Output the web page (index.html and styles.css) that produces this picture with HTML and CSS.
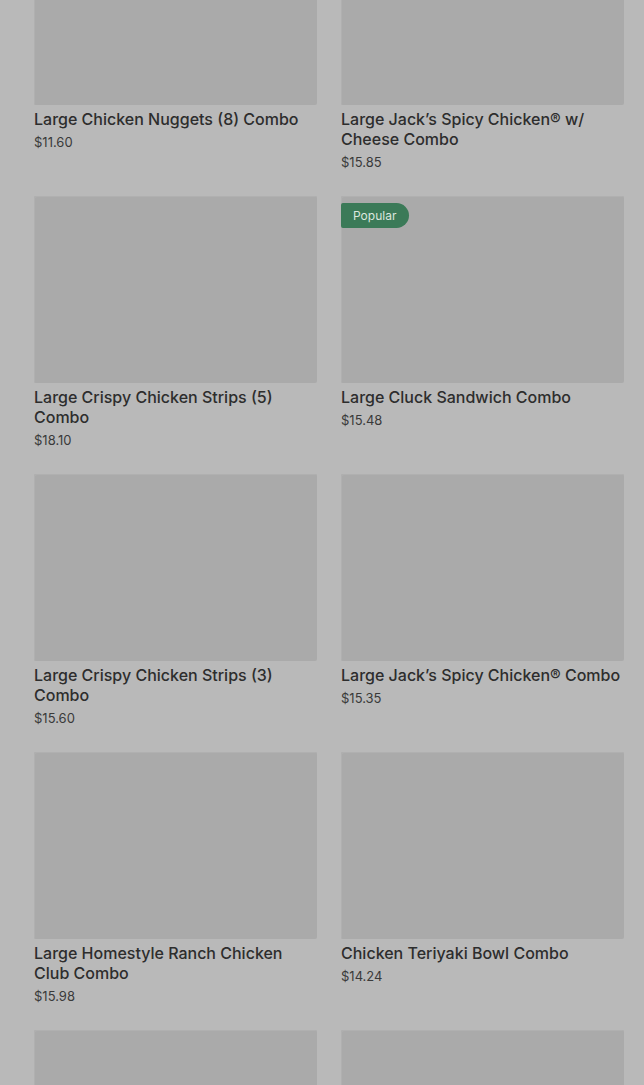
FILE: index.html
```html
<!DOCTYPE html>
<html lang="en">
<head>
<meta charset="utf-8">
<title>Menu</title>
<link rel="stylesheet" href="styles.css">
</head>
<body>
<main class="grid">
  <article class="card">
    <div class="thumb"></div>
    <h3 class="title">Large Chicken Nuggets (8) Combo</h3>
    <div class="price">$11.60</div>
  </article>
  <article class="card">
    <div class="thumb"></div>
    <h3 class="title">Large Jack’s Spicy Chicken® w/ Cheese Combo</h3>
    <div class="price">$15.85</div>
  </article>
  <article class="card">
    <div class="thumb"></div>
    <h3 class="title">Large Crispy Chicken Strips (5) Combo</h3>
    <div class="price">$18.10</div>
  </article>
  <article class="card">
    <div class="thumb"><span class="badge">Popular</span></div>
    <h3 class="title">Large Cluck Sandwich Combo</h3>
    <div class="price">$15.48</div>
  </article>
  <article class="card">
    <div class="thumb"></div>
    <h3 class="title">Large Crispy Chicken Strips (3) Combo</h3>
    <div class="price">$15.60</div>
  </article>
  <article class="card">
    <div class="thumb"></div>
    <h3 class="title">Large Jack’s Spicy Chicken® Combo</h3>
    <div class="price">$15.35</div>
  </article>
  <article class="card">
    <div class="thumb"></div>
    <h3 class="title">Large Homestyle Ranch Chicken Club Combo</h3>
    <div class="price">$15.98</div>
  </article>
  <article class="card">
    <div class="thumb"></div>
    <h3 class="title">Chicken Teriyaki Bowl Combo</h3>
    <div class="price">$14.24</div>
  </article>
  <article class="card">
    <div class="thumb"></div>
  </article>
  <article class="card">
    <div class="thumb"></div>
  </article>
</main>
</body>
</html>
```
FILE: styles.css
```css
html, body {
  margin: 0;
  padding: 0;
  background: #b9b9b9;
  overflow: hidden;
  height: 1085px;
}
body {
  font-family: Inter, "Liberation Sans", Arial, sans-serif;
  color: #2b2b2b;
}
.grid {
  display: grid;
  grid-template-columns: 283px 283px;
  column-gap: 24px;
  row-gap: 25px;
  padding-left: 34px;
  margin-top: -82px;
}
.card {
  display: flex;
  flex-direction: column;
}
.thumb {
  position: relative;
  height: 187px;
  background: #aaaaaa;
  border-radius: 2px;
  box-shadow: inset 1px 1px 0 #b0b0b0;
}
.badge {
  position: absolute;
  left: 0;
  top: 7px;
  height: 25px;
  line-height: 25px;
  padding: 0 13px 0 12px;
  background: #3b7a58;
  color: #dbe7df;
  font-size: 12px;
  border-radius: 2px 13px 13px 2px;
}
.title {
  margin: 4px 0 0;
  font-size: 16px;
  line-height: 20px;
  font-weight: 500;
  color: #2d2d2d;
}
.price {
  margin-top: 4px;
  font-size: 13px;
  line-height: 18px;
  color: #3a3a3a;
}
```
